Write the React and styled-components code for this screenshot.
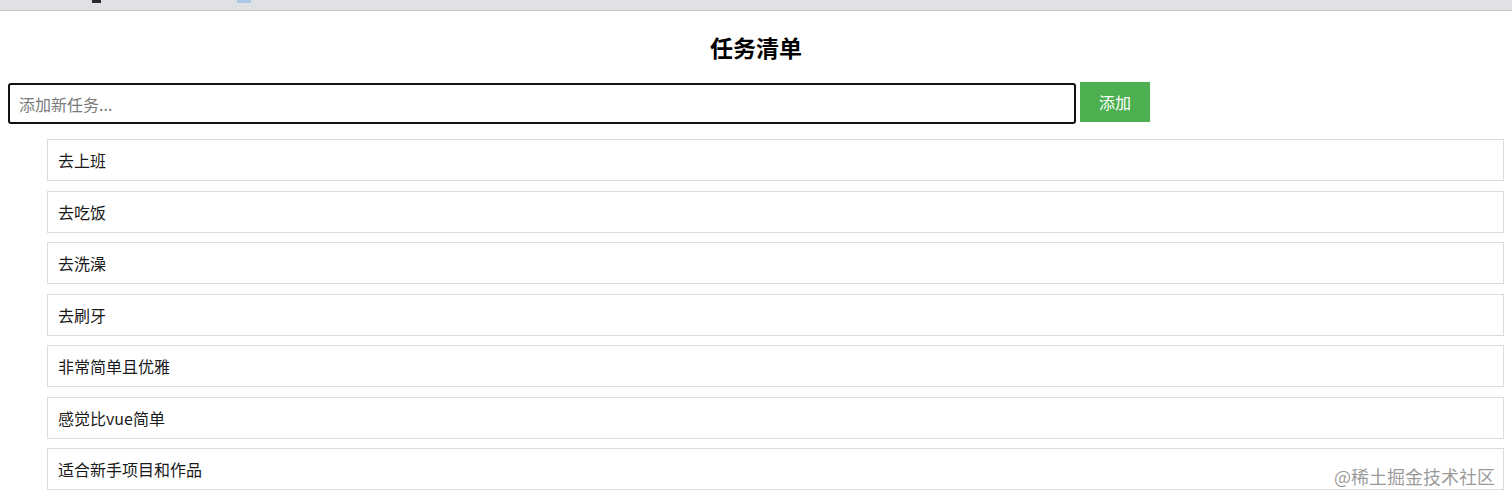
import React, { useState } from 'react'
import styled, { createGlobalStyle } from 'styled-components'

const GlobalStyle = createGlobalStyle`
    html, body {
        margin: 0;
        padding: 0;
        background: #fff;
        font-family: 'Microsoft YaHei', 'Noto Sans CJK SC', 'Noto Sans', sans-serif;
        overflow: hidden;
    }
`;

/* thin slice of the browser chrome left in the screenshot */
const BrowserStrip = styled.div`
    display: flex;
    align-items: flex-start;
    gap: 136px;
    height: 10px;
    padding-left: 92px;
    background: #dfe1e5;
    border-bottom: 1px solid #c4c6ca;
`;

const StripMark = styled.span`
    width: ${p => p.$width}px;
    height: 3px;
    background: ${p => p.$color};
`;

const Page = styled.div`
    position: relative;
    display: flex;
    flex-direction: column;
    padding: 0 8px;
    height: 491px;
`;

const Title = styled.h1`
    margin: 0;
    padding-top: 22px;
    line-height: 28px;
    text-align: center;
    font-size: 23px;
    font-weight: bold;
    color: #000;
`;

const Form = styled.form`
    display: flex;
    align-items: flex-start;
    gap: 4px;
    margin-top: 21px;
`;

const TaskInput = styled.input`
    box-sizing: border-box;
    width: 1068px;
    height: 41px;
    margin-top: 1px;
    padding: 0 9px;
    border: 2px solid #111;
    border-radius: 3px;
    font-family: inherit;
    font-size: 16px;
    color: #222;
    outline: none;

    &::placeholder {
        color: #7a7a7a;
    }
`;

const AddButton = styled.button`
    width: 70px;
    height: 40px;
    border: none;
    background-color: #4caf50;
    color: #fff;
    font-family: inherit;
    font-size: 16px;
    cursor: pointer;
`;

const List = styled.ul`
    list-style: none;
    margin: 15px 0 0;
    padding: 0 0 0 39px;
`;

const Item = styled.li`
    box-sizing: border-box;
    height: 42px;
    margin-bottom: 9.5px;
    padding: 10px;
    border: 1px solid #dcdcdc;
    font-size: 16px;
    line-height: 20px;
    color: #1a1a1a;
`;

const Watermark = styled.div`
    position: absolute;
    right: 17px;
    bottom: 14px;
    font-size: 18px;
    line-height: 24px;
    color: rgba(120, 120, 120, 0.75);
    pointer-events: none;
`;

const initialTasks = [
    '去上班',
    '去吃饭',
    '去洗澡',
    '去刷牙',
    '非常简单且优雅',
    '感觉比vue简单',
    '适合新手项目和作品',
]

export default function App() {
    const [tasks, setTasks] = useState(initialTasks)
    const [text, setText] = useState('')

    const addTask = e => {
        e.preventDefault()
        if (!text.trim()) return
        setTasks([...tasks, text.trim()])
        setText('')
    }

    return (
        <>
            <GlobalStyle />
            <BrowserStrip>
                <StripMark $width={9} $color="#2b2b2b" />
                <StripMark $width={14} $color="#a9c8ea" />
            </BrowserStrip>
            <Page>
                <Title>任务清单</Title>
                <Form onSubmit={addTask}>
                    <TaskInput
                        value={text}
                        onChange={e => setText(e.target.value)}
                        placeholder="添加新任务..."
                    />
                    <AddButton type="submit">添加</AddButton>
                </Form>
                <List>
                    {tasks.map((t, i) => (
                        <Item key={i}>{t}</Item>
                    ))}
                </List>
                <Watermark>@稀土掘金技术社区</Watermark>
            </Page>
        </>
    )
}
